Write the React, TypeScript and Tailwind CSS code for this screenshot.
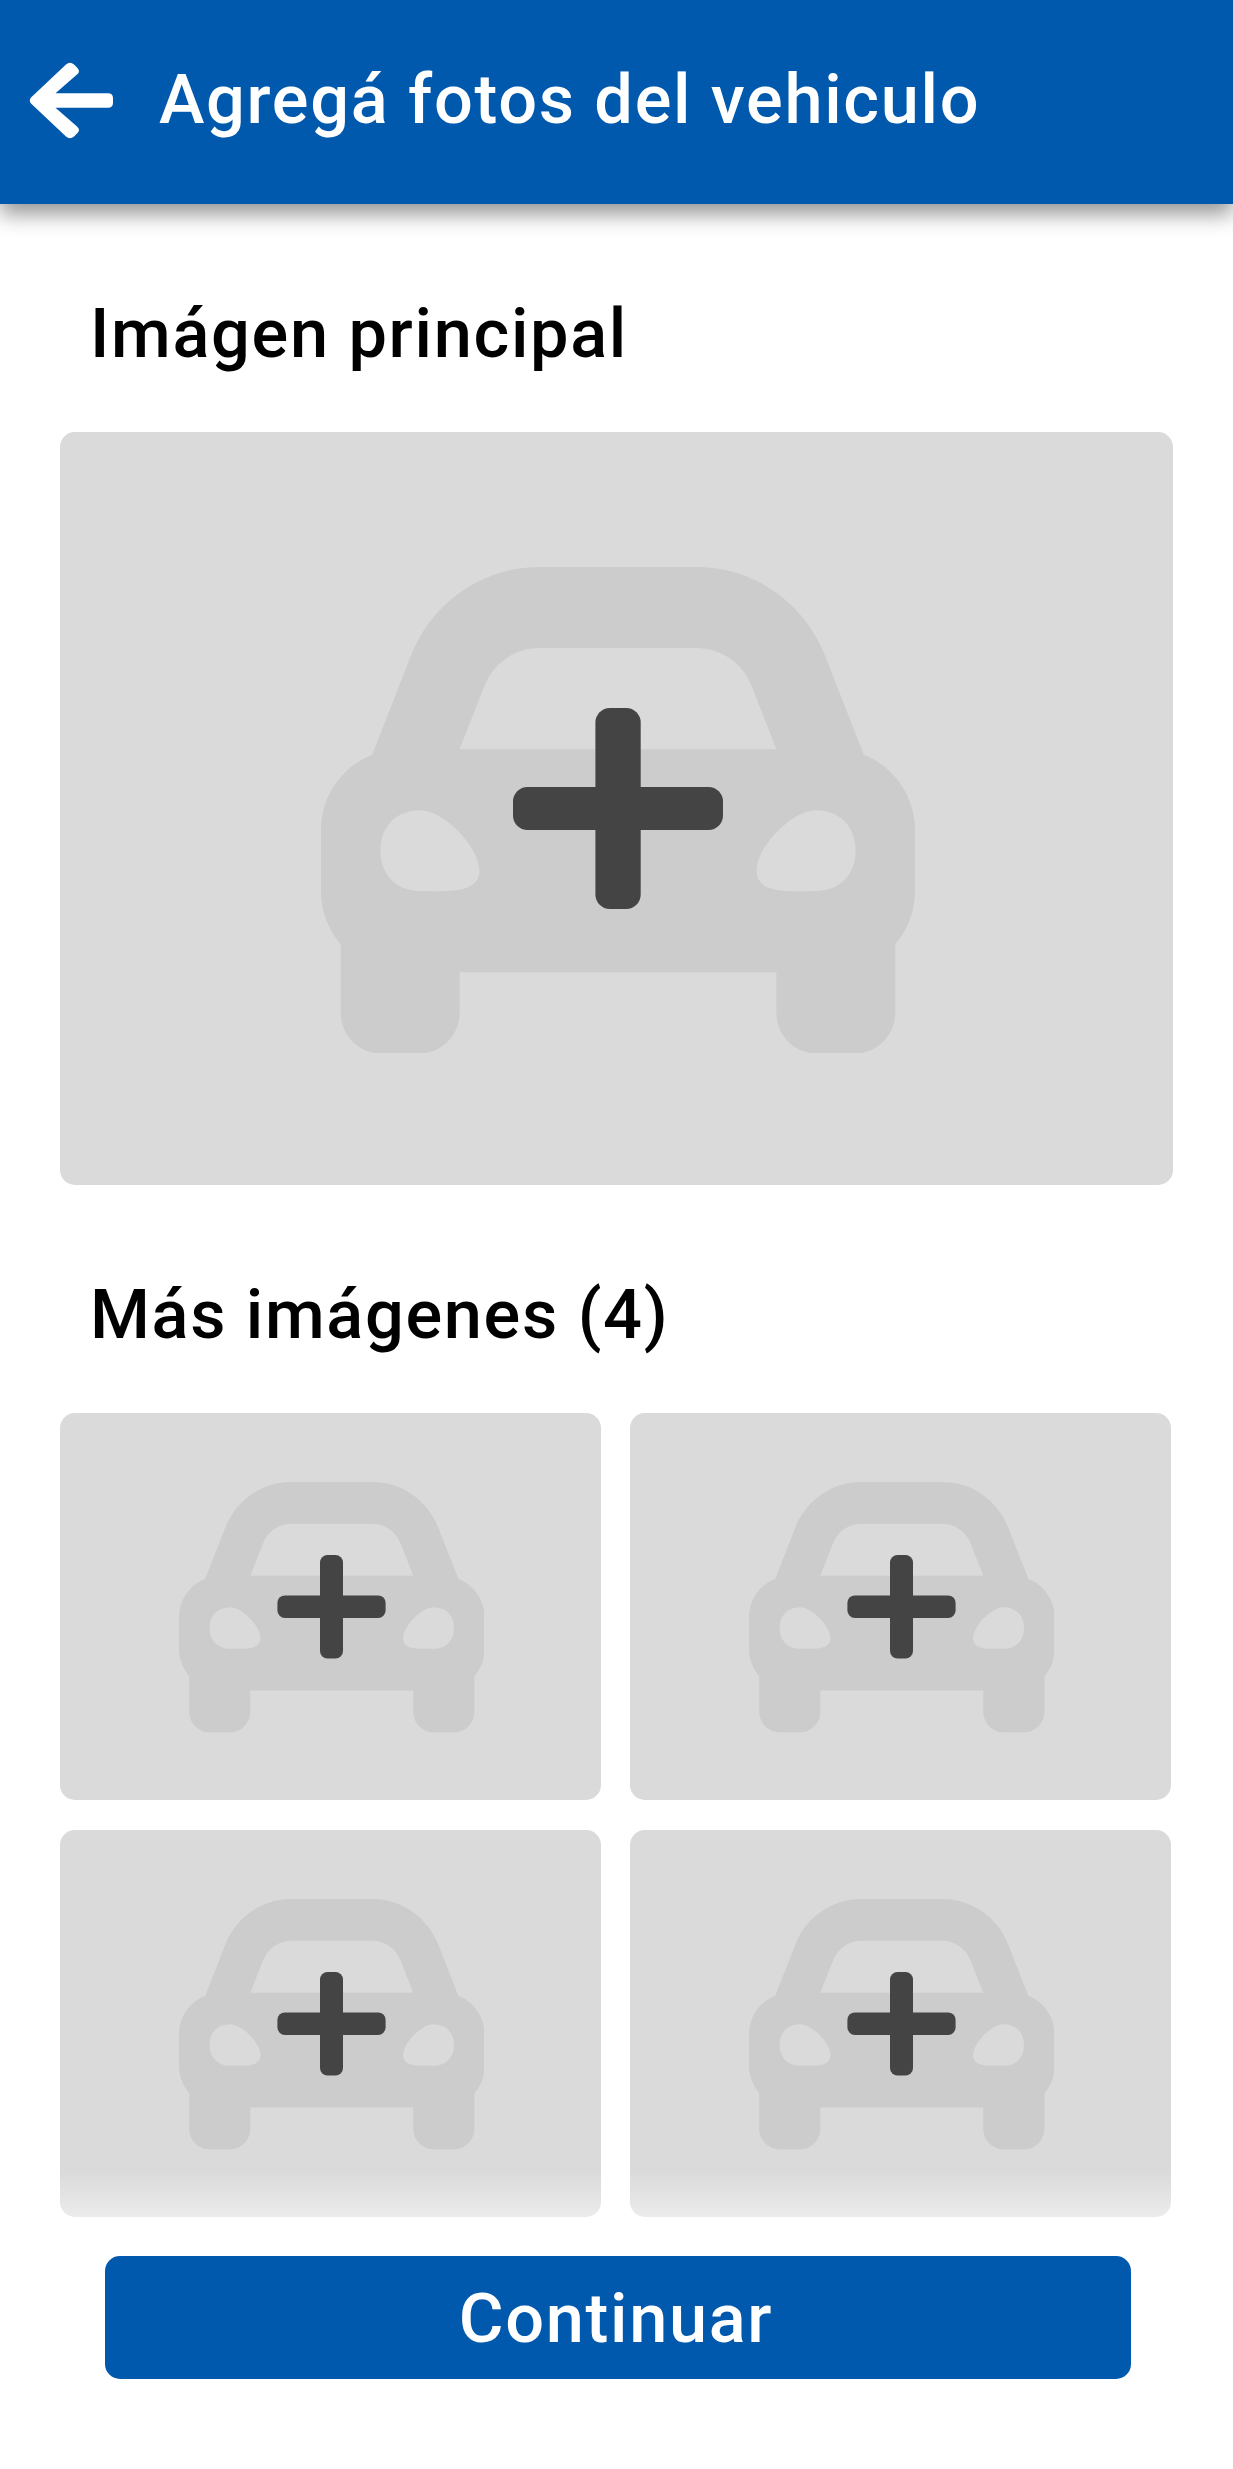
type PlusSize = 'lg' | 'sm';

function Car({ className }: { className: string }) {
  return (
    <svg className={className} viewBox="0 64 480 384" preserveAspectRatio="none" fill="#cccccc" aria-hidden="true">
      <path d="M438.66 212.33l-11.24-28.1-19.93-49.83C390.38 91.63 349.57 64 303.5 64h-127c-46.06 0-86.88 27.63-103.99 70.4l-19.93 49.83-11.24 28.1C17.22 221.5 0 244.66 0 272v48c0 16.12 6.16 30.67 16 41.93V416c0 17.67 14.33 32 32 32h32c17.67 0 32-14.33 32-32v-32h256v32c0 17.67 14.33 32 32 32h32c17.67 0 32-14.33 32-32v-54.07c9.84-11.25 16-25.8 16-41.93v-48c0-27.34-17.22-50.5-41.34-59.67zm-306.73-54.16c7.29-18.22 24.94-30.17 44.57-30.17h127c19.63 0 37.28 11.95 44.57 30.17L368 208H112l19.93-49.83zM80 319.8c-19.2 0-32-12.76-32-31.9S60.8 256 80 256s48 28.71 48 47.85-28.8 15.95-48 15.95zm320 0c-19.2 0-48 3.19-48-15.95S380.8 256 400 256s32 12.76 32 31.9-12.8 31.9-32 31.9z" />
    </svg>
  );
}

function Plus({ size }: { size: PlusSize }) {
  return size === 'lg' ? (
    <svg className="absolute left-[453px] top-[276px] h-[201px] w-[210px]" viewBox="0 0 210 201" fill="#444444" aria-hidden="true">
      <rect x="82.4" width="45.3" height="201" rx="14.5" />
      <rect y="79" width="210" height="43" rx="14.5" />
    </svg>
  ) : (
    <svg className="absolute left-[217px] top-[142px] h-[104px] w-[109px]" viewBox="0 0 109 104" fill="#444444" aria-hidden="true">
      <rect x="43" width="23" height="103.5" rx="7.5" />
      <rect x="0.4" y="40.4" width="108.2" height="22.6" rx="7.5" />
    </svg>
  );
}

function Tile() {
  return (
    <button type="button" className="relative h-[387.3px] w-[541.4px] rounded-[15px] bg-[#dadada]">
      <Car className="absolute left-[118.7px] top-[69.4px] h-[250.3px] w-[305.6px]" />
      <Plus size="sm" />
    </button>
  );
}

export default function App() {
  return (
    <div className="flex h-[2469px] w-[1233px] flex-col overflow-hidden bg-white font-['Roboto',sans-serif] text-[68.5px] font-medium leading-[80px] tracking-[1.68px] text-black">
      <header className="flex h-[204px] shrink-0 items-center bg-[#0059ac] pl-[29px] text-white shadow-[0_10px_20px_rgba(0,0,0,0.42)]">
        <svg className="mt-[-3px] h-[77px] w-[85px]" viewBox="29 62 85 77" fill="currentColor" aria-label="Volver">
          <path d="M31 97.5 L66 64.5 Q70 61 74 64.5 L77 67.5 Q81 71.5 77 74.5 L55.5 93.3 H108 Q113 93.3 113 98.3 V102.7 Q113 107.7 108 107.7 H55.5 L77 126.5 Q81 130 77 133.5 L74 136.5 Q70 140 66 136.5 L31 103.5 Q28.5 100.5 31 97.5Z" />
        </svg>
        <h1 className="ml-[45px] mt-[-4px] whitespace-nowrap">Agregá fotos del vehiculo</h1>
      </header>

      <main className="h-[2013px] shrink-0 px-[60px]">
        <h2 className="pl-[30px] pt-[90px]">Imágen principal</h2>
        <button type="button" className="relative mt-[58px] block h-[753px] w-[1113px] rounded-[15px] bg-[#dadada]">
          <Car className="absolute left-[261px] top-[134.8px] h-[486.3px] w-[594px]" />
          <Plus size="lg" />
        </button>
        <h2 className="pl-[30px] pt-[90px]">Más imágenes (4)</h2>
        <div className="mt-[58px] grid w-max grid-cols-2 gap-x-[28.6px] gap-y-[29.7px]">
          <Tile />
          <Tile />
          <Tile />
          <Tile />
        </div>
      </main>

      <footer className="relative z-10 mt-[-46px] flex h-[298px] shrink-0 flex-col items-center bg-linear-to-b from-white/0 to-white to-[96px] pt-[85px]">
        <button type="button" className="ml-[3px] h-[123px] w-[1026px] rounded-[15px] bg-[#0059ac] pr-[4px] pt-[3px] text-white">
          Continuar
        </button>
      </footer>
    </div>
  );
}
